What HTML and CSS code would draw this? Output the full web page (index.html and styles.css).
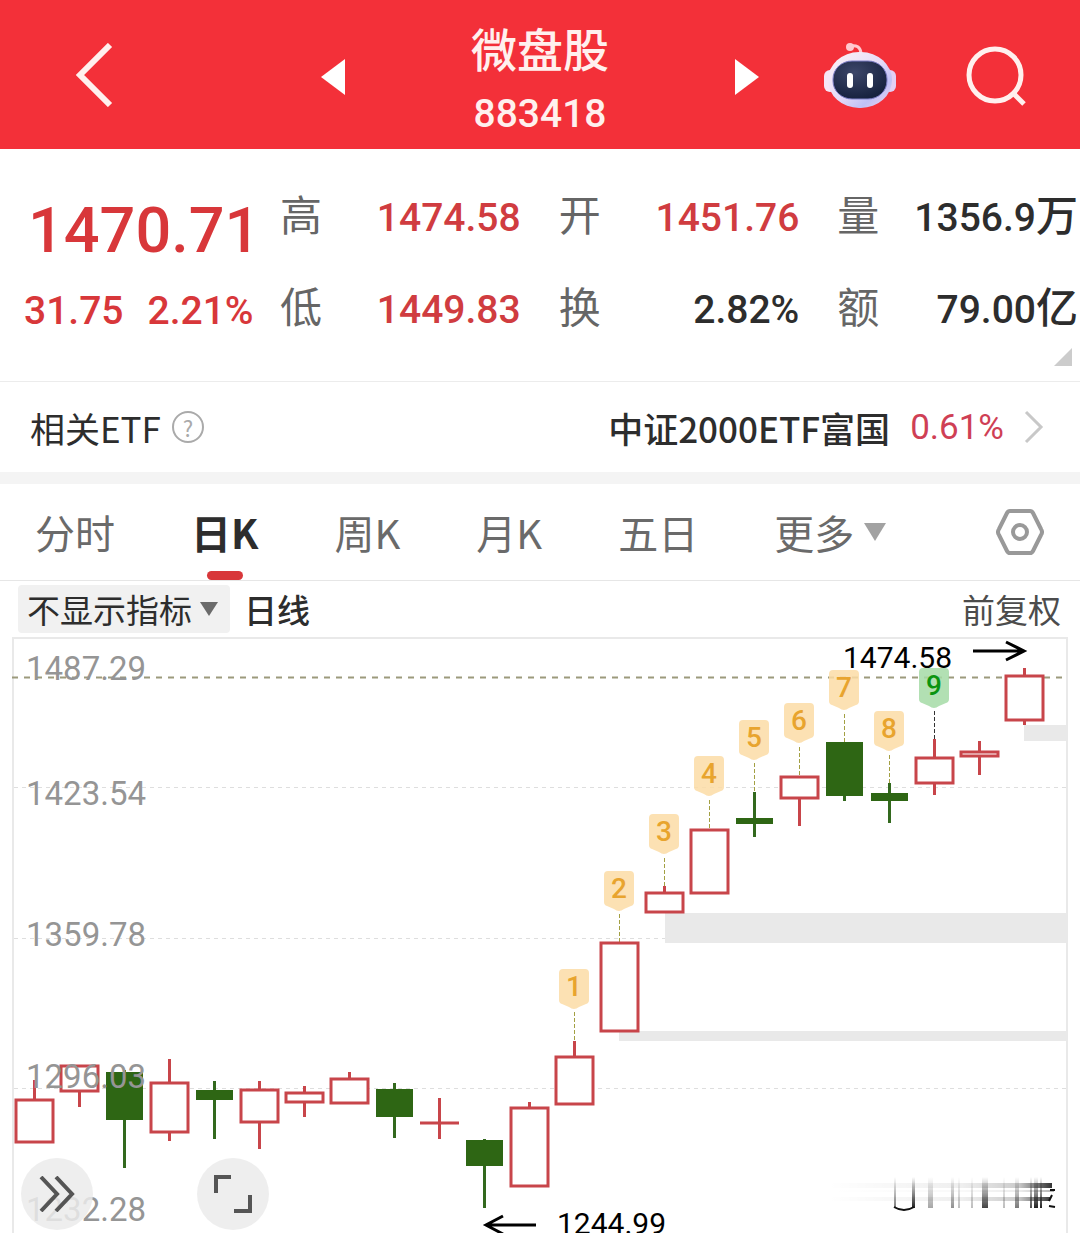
FILE: index.html
```html
<!DOCTYPE html>
<html lang="zh-CN">
<head>
<meta charset="utf-8">
<meta name="viewport" content="width=device-width, initial-scale=1">
<title>微盘股 883418</title>
<link rel="stylesheet" href="styles.css">
</head>
<body>
<header class="topbar">
  <button class="icon-btn back" aria-label="返回">
    <svg width="38" height="64" viewBox="0 0 38 64"><path d="M35 2 5 32 35 62" fill="none" stroke="#fff0ee" stroke-width="6"/></svg>
  </button>
  <div class="switcher">
    <button class="icon-btn" aria-label="上一个"><svg width="24" height="40" viewBox="0 0 24 40"><path d="M24 4V40L0 22Z" fill="#fff"/></svg></button>
    <div class="heading">
      <h1 class="name">微盘股</h1>
      <p class="code">883418</p>
    </div>
    <button class="icon-btn" aria-label="下一个"><svg width="24" height="40" viewBox="0 0 24 40"><path d="M0 4V40L24 22Z" fill="#fff"/></svg></button>
  </div>
  <div class="actions">
    <button class="icon-btn" aria-label="智能助手">
      <svg width="72" height="68" viewBox="0 0 72 68">
        <defs>
          <linearGradient id="shell" x1="0" y1="0" x2="1" y2="1"><stop offset="0" stop-color="#fff3f5"/><stop offset=".5" stop-color="#e6dcf8"/><stop offset=".75" stop-color="#bfc0f6"/><stop offset="1" stop-color="#f6d6ec"/></linearGradient>
          <radialGradient id="visor" cx=".4" cy=".3" r=".7"><stop offset="0" stop-color="#3c4669"/><stop offset="1" stop-color="#17223f"/></radialGradient>
        </defs>
        <path d="M26 5Q36 3 37 12" fill="none" stroke="#ffc9d0" stroke-width="3"/>
        <circle cx="26" cy="6" r="4" fill="#ffc9d0"/>
        <rect x="0" y="29" width="12" height="22" rx="6" fill="#f6e6f6"/>
        <rect x="60" y="29" width="12" height="22" rx="6" fill="#e3cff5"/>
        <rect x="4" y="11" width="64" height="56" rx="31" ry="28" fill="url(#shell)"/>
        <rect x="9" y="20" width="54" height="38" rx="19" ry="18" fill="url(#visor)" stroke="#7f80c8"/>
        <rect x="23" y="32" width="6" height="15" rx="3" fill="#fff"/>
        <rect x="43" y="32" width="6" height="15" rx="3" fill="#fff"/>
      </svg>
    </button>
    <button class="icon-btn" aria-label="搜索">
      <svg width="62" height="62" viewBox="0 0 62 62"><g fill="none" stroke="#fff0ee" stroke-width="5"><circle cx="30" cy="31" r="26"/><path d="M47 48 59 60"/></g></svg>
    </button>
  </div>
</header>

<main>
  <section class="quote" aria-label="行情">
    <div class="last">
      <p class="price">1470.71</p>
      <p class="change"><span>31.75</span><span>2.21%</span></p>
    </div>
    <dl class="stats">
      <div class="stat up"><dt>高</dt><dd>1474.58</dd></div>
      <div class="stat up"><dt>开</dt><dd>1451.76</dd></div>
      <div class="stat"><dt>量</dt><dd>1356.9<span class="unit">万</span></dd></div>
      <div class="stat up"><dt>低</dt><dd>1449.83</dd></div>
      <div class="stat"><dt>换</dt><dd>2.82%</dd></div>
      <div class="stat"><dt>额</dt><dd>79.00<span class="unit">亿</span></dd></div>
    </dl>
    <svg class="corner" width="18" height="18" viewBox="0 0 18 18"><path d="M18 0V18H0Z" fill="#ccc"/></svg>
  </section>

  <section class="etf">
    <span>相关ETF</span>
    <button class="help" aria-label="说明">?</button>
    <a class="etf-link" href="#etf">
      <span class="etf-name">中证2000ETF富国</span>
      <span class="etf-pct">0.61%</span>
      <svg width="20" height="34" viewBox="0 0 20 34"><path d="M2 2 17 17 2 32" fill="none" stroke="#c8c8c8" stroke-width="3"/></svg>
    </a>
  </section>

  <nav class="tabs" aria-label="周期">
    <button class="tab">分时</button>
    <button class="tab active" aria-current="true">日K</button>
    <button class="tab">周K</button>
    <button class="tab">月K</button>
    <button class="tab">五日</button>
    <button class="tab more" aria-haspopup="true">更多<svg width="24" height="20" viewBox="0 0 24 20"><path d="M1 1H23L12 19Z" fill="#a2a2a2"/></svg></button>
    <button class="icon-btn settings" aria-label="设置">
      <svg width="48" height="46" viewBox="0 0 48 46"><g fill="none" stroke="#999" stroke-width="4" stroke-linejoin="round"><path d="M14 2H34Q36 2 37 4L45 20Q47 23 45 26L37 42Q36 44 34 44H14Q12 44 11 42L3 26Q1 23 3 20L11 4Q12 2 14 2Z"/><circle cx="24" cy="23" r="7"/></g></svg>
    </button>
  </nav>

  <div class="toolbar">
    <label class="picker">
      <select aria-label="指标"><option>不显示指标</option></select>
      <svg width="18" height="14" viewBox="0 0 18 14"><path d="M0 0H18L9 14Z" fill="#6b6b6b"/></svg>
    </label>
    <span class="period">日线</span>
    <span class="adjust">前复权</span>
  </div>

  <section class="chart">
    <svg class="plot" viewBox="12 637 1056 596" role="img" aria-label="日K线图">
      <defs>
        <path id="tag" d="M-11 0H11Q15 0 15 4V31Q15 34 12 35L5 38Q0 42 -5 38L-12 35Q-15 34 -15 31V4Q-15 0 -11 0Z"/>
        <linearGradient id="fadeX"><stop offset="0" stop-color="#000" stop-opacity="0"/><stop offset=".6" stop-color="#000" stop-opacity=".08"/><stop offset=".85" stop-color="#000" stop-opacity=".25"/><stop offset="1" stop-color="#000"/></linearGradient>
        <linearGradient id="fadeY" x2="0" y2="1"><stop offset="0" stop-color="#222" stop-opacity="0"/><stop offset="1" stop-color="#222"/></linearGradient>
      </defs>
      <path class="frame" d="M13 1233V638H1067V1233"/>
      <path class="grid" d="M14 787.5H1066M14 938.5H1066M14 1088.5H1066"/>
      <g class="gap"><path d="M1024 725H1068V741H1024ZM665 913H1068V943H665ZM619 1031H1068V1041H619Z"/></g>
      <path class="limit" d="M12 677.5H1066"/>

      <g class="leader">
        <path d="M574.5 1012V1041M619.5 914V942M664.5 858V886M709.5 800V829M754.5 763V792M799.5 747V776M844.5 714V742M889.5 755V783"/>
        <path class="leader-dark" d="M934.5 711V739"/>
      </g>

      <g class="up-wick">
        <path d="M34.5 1080V1099M79.5 1092V1107M169.5 1059V1082M169.5 1132V1141M259.5 1081V1090M259.5 1122V1149M304.5 1086V1093M304.5 1103V1117M349.5 1072V1079M439.5 1098V1139M529.5 1102V1108M574.5 1041V1057M664.5 886V893M799.5 798V826M934.5 739V757M934.5 783V795M979.5 741V775M1024.5 668V676M1024.5 720V725"/>
      </g>
      <g class="up-body">
        <rect x="16" y="1100" width="37" height="42"/>
        <rect x="61" y="1066" width="37" height="25"/>
        <rect x="151" y="1083" width="37" height="49"/>
        <rect x="241" y="1090" width="37" height="32"/>
        <rect x="286" y="1093" width="37" height="9"/>
        <rect x="331" y="1079" width="37" height="24"/>
        <path d="M420 1123H459"/>
        <rect x="511" y="1108" width="37" height="78"/>
        <rect x="556" y="1057" width="37" height="47"/>
        <rect x="601" y="943" width="37" height="88"/>
        <rect x="646" y="893" width="37" height="19"/>
        <rect x="691" y="830" width="37" height="63"/>
        <rect x="781" y="777" width="37" height="21"/>
        <rect x="916" y="758" width="37" height="25"/>
        <rect x="961" y="752" width="37" height="4"/>
        <rect x="1006" y="676" width="37" height="44"/>
      </g>
      <path class="down-wick" d="M124.5 1070V1168M214.5 1081V1139M394.5 1083V1138M484.5 1139V1208M754.5 792V837M844.5 742V801M889.5 783V823"/>
      <g class="down-body">
        <rect x="106" y="1072" width="37" height="48"/>
        <rect x="196" y="1090" width="37" height="10"/>
        <rect x="376" y="1089" width="37" height="28"/>
        <rect x="466" y="1140" width="37" height="26"/>
        <rect x="736" y="818" width="37" height="6"/>
        <rect x="826" y="742" width="37" height="54"/>
        <rect x="871" y="793" width="37" height="8"/>
      </g>

      <g class="tags">
        <g transform="translate(574 969)"><use href="#tag"/><text y="27">1</text></g>
        <g transform="translate(619 871)"><use href="#tag"/><text y="27">2</text></g>
        <g transform="translate(664 814)"><use href="#tag"/><text y="27">3</text></g>
        <g transform="translate(709 756)"><use href="#tag"/><text y="27">4</text></g>
        <g transform="translate(754 720)"><use href="#tag"/><text y="27">5</text></g>
        <g transform="translate(799 703)"><use href="#tag"/><text y="27">6</text></g>
        <g transform="translate(844 670)"><use href="#tag"/><text y="27">7</text></g>
        <g transform="translate(889 711)"><use href="#tag"/><text y="27">8</text></g>
        <g class="tag-nine" transform="translate(934 668)"><use href="#tag"/><text y="27">9</text></g>
      </g>

      <g class="axis">
        <text x="26" y="680">1487.29</text>
        <text x="26" y="805">1423.54</text>
        <text x="26" y="946">1359.78</text>
        <text x="26" y="1088">1296.03</text>
        <text x="26" y="1221">1232.28</text>
      </g>

      <g class="extreme">
        <text x="843" y="668">1474.58</text>
        <path d="M973 651H1024M1006 642 1024 651 1006 660"/>
        <text x="557" y="1234">1244.99</text>
        <path d="M536 1225H486M503 1216 486 1225 503 1234"/>
      </g>

      <g class="smear">
        <path d="M828 1183H1052V1188H828ZM828 1197H1050V1201H828Z" fill="url(#fadeX)" opacity=".8"/>
        <path d="M828 1190H1054V1192H828Z" fill="url(#fadeX)" opacity=".3"/>
        <g fill="url(#fadeY)">
          <rect x="894" y="1177" width="2" height="31" opacity=".6"/>
          <rect x="912" y="1177" width="3" height="31"/>
          <rect x="928" y="1177" width="5" height="31" opacity=".4"/>
          <rect x="951" y="1177" width="3" height="31" opacity=".5"/>
          <rect x="958" y="1177" width="2" height="31" opacity=".3"/>
          <rect x="971" y="1177" width="2" height="31" opacity=".3"/>
          <rect x="982" y="1177" width="6" height="31" opacity=".85"/>
          <rect x="1003" y="1177" width="2" height="31" opacity=".3"/>
          <rect x="1015" y="1177" width="4" height="31" opacity=".6"/>
          <rect x="1030" y="1177" width="2" height="31" opacity=".8"/>
          <rect x="1034" y="1177" width="4" height="31"/>
          <rect x="1040" y="1177" width="2" height="31"/>
        </g>
        <path d="M894 1207Q904 1213 914 1207M1050 1190H1055M1052 1195 1049 1201M1049 1206 1055 1207" fill="none" stroke="#111" stroke-width="2"/>
      </g>
    </svg>
    <div class="floating">
      <button class="round" aria-label="展开"><svg width="36" height="36" viewBox="0 0 36 36"><path d="M2 1 18 18 2 35M17 1 33 18 17 35" fill="none" stroke="#555" stroke-width="4"/></svg></button>
      <button class="round" aria-label="全屏"><svg width="38" height="38" viewBox="0 0 38 38"><path d="M2 18V2H17M36 20V36H20" fill="none" stroke="#555" stroke-width="4"/></svg></button>
    </div>
  </section>
</main>
</body>
</html>
```
FILE: styles.css
```css
* { box-sizing: border-box; }

body {
  margin: 0;
  background: #fff;
  color: #2d2d2d;
  font-family: "Noto Sans CJK SC", sans-serif;
  overflow-x: hidden;
}

h1, p, dl, dd { margin: 0; }
svg { display: block; flex: none; }

button, select {
  border: 0;
  padding: 0;
  background: none;
  color: inherit;
  font: inherit;
  cursor: pointer;
}

.code, .last, .stat dd, .etf-pct, .axis, .tags, .extreme {
  font-family: Roboto, "Noto Sans CJK SC", sans-serif;
}

.topbar {
  display: grid;
  grid-template-columns: 1fr 438px 1fr;
  align-items: center;
  background: #f33039;
  color: #fff0ee;
}
.back { justify-self: start; padding-left: 75px; }
.switcher { display: flex; align-items: center; justify-content: space-between; }
.heading { padding-top: 15px; text-align: center; }
.name { font-size: 46px; font-weight: 500; line-height: 64px; }
.code { font-size: 39px; font-weight: 500; line-height: 70px; }
.actions { display: flex; align-items: center; justify-content: flex-end; gap: 69px; padding-right: 53px; }

.quote {
  position: relative;
  display: grid;
  grid-template-columns: 280px 1fr;
  padding: 18px 2px 30px 0;
  border-bottom: 1px solid #ececec;
}
.last { padding-top: 8px; color: #d8373a; font-weight: 500; }
.price { padding-left: 28px; font-size: 63px; line-height: 112px; }
.change { display: flex; gap: 24px; padding-left: 24px; font-size: 39px; line-height: 48px; }
.stats { display: grid; grid-template-columns: repeat(3, 1fr); column-gap: 38px; }
.stat { display: flex; align-items: baseline; justify-content: space-between; font-size: 39px; line-height: 92px; height: 92px; white-space: nowrap; }
.stat dt { color: #666; font-size: 42px; }
.stat dd { font-weight: 500; }
.unit { font-size: 42px; line-height: 1; }
.up dd { color: #d03c40; }
.corner { position: absolute; right: 8px; bottom: 15px; }

.etf {
  display: flex;
  align-items: center;
  height: 102px;
  padding: 0 36px 0 30px;
  border-bottom: 12px solid #f4f4f4;
  font-size: 35px;
}
.help {
  width: 32px;
  height: 32px;
  margin-left: 11px;
  border: 2px solid #aaa;
  border-radius: 50%;
  color: #aaa;
  font-size: 22px;
  line-height: 28px;
}
.etf-link { display: flex; align-items: center; margin-left: auto; color: inherit; text-decoration: none; }
.etf-name { font-weight: 500; }
.etf-pct { margin: 0 20px; color: #cf3f55; }

.tabs {
  display: flex;
  align-items: stretch;
  gap: 76px;
  height: 97px;
  padding: 0 36px 0 35px;
  border-bottom: 1px solid #e6e6e6;
  color: #6a6a6a;
  font-size: 40px;
}
.tab { position: relative; white-space: nowrap; }
.active { color: #2d2d2d; font-weight: 700; }
.active::after {
  content: "";
  position: absolute;
  bottom: 0;
  left: 50%;
  width: 36px;
  height: 9px;
  margin-left: -18px;
  border-radius: 5px;
  background: #d8373a;
}
.more { display: flex; align-items: center; gap: 9px; }
.settings { margin-left: auto; }

.toolbar {
  display: flex;
  align-items: center;
  height: 56px;
  padding: 0 19px 0 18px;
  font-size: 33px;
}
.picker {
  display: flex;
  align-items: center;
  gap: 8px;
  height: 48px;
  padding: 0 12px 0 9px;
  border-radius: 4px;
  background: #f1f1f1;
}
.picker select { appearance: none; }
.period { margin-left: 14px; font-weight: 500; }
.adjust { margin-left: auto; color: #4c4c4c; }

.chart { position: relative; padding: 0 12px; }
.plot { width: 100%; height: auto; overflow: hidden; }
.frame { fill: none; stroke: #e9e9e9; stroke-width: 2; }
.grid { stroke: #dedede; stroke-dasharray: 4 4; }
.limit { stroke: #9c9a7c; stroke-width: 2; stroke-dasharray: 6 6; }
.gap { fill: #e9e9e9; }
.leader { stroke: #a3a043; stroke-dasharray: 4 2; }
.leader-dark { stroke: #333; }
.up-wick { stroke: #c8454a; stroke-width: 3; }
.up-body { fill: #fff; stroke: #c8454a; stroke-width: 3; }
.down-wick { stroke: #33691e; stroke-width: 3; }
.down-body { fill: #2e6614; }
.tags { fill: #fbdca6; fill-opacity: .85; font-size: 28px; font-weight: 500; text-anchor: middle; }
.tags text { fill: #e8a42e; fill-opacity: 1; }
.tag-nine { fill: #a5dba6; }
.tags .tag-nine text { fill: #0b9410; }
.axis { fill: #959595; font-size: 33px; }
.extreme { font-size: 30px; }
.extreme path { fill: none; stroke: #000; stroke-width: 3; }

.floating { position: absolute; left: 21px; bottom: 3px; display: flex; gap: 104px; }
.round {
  display: grid;
  place-items: center;
  width: 72px;
  height: 72px;
  border-radius: 50%;
  background: rgba(235, 235, 235, .85);
}
```
